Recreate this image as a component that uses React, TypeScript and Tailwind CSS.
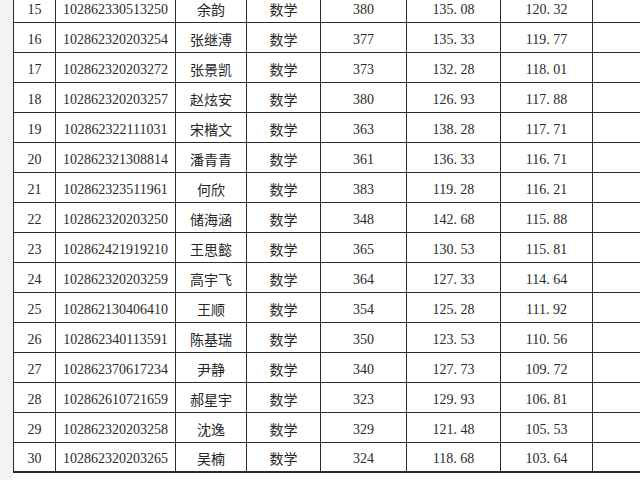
import React from "react";

const rows: [string, string, string, string, string, string][] = [
  ["15", "102862330513250", "余韵", "380", "135.08", "120.32"],
  ["16", "102862320203254", "张继溥", "377", "135.33", "119.77"],
  ["17", "102862320203272", "张景凯", "373", "132.28", "118.01"],
  ["18", "102862320203257", "赵炫安", "380", "126.93", "117.88"],
  ["19", "102862322111031", "宋楷文", "363", "138.28", "117.71"],
  ["20", "102862321308814", "潘青青", "361", "136.33", "116.71"],
  ["21", "102862323511961", "何欣", "383", "119.28", "116.21"],
  ["22", "102862320203250", "储海涵", "348", "142.68", "115.88"],
  ["23", "102862421919210", "王思懿", "365", "130.53", "115.81"],
  ["24", "102862320203259", "高宇飞", "364", "127.33", "114.64"],
  ["25", "102862130406410", "王顺", "354", "125.28", "111.92"],
  ["26", "102862340113591", "陈基瑞", "350", "123.53", "110.56"],
  ["27", "102862370617234", "尹静", "340", "127.73", "109.72"],
  ["28", "102862610721659", "郝星宇", "323", "129.93", "106.81"],
  ["29", "102862320203258", "沈逸", "329", "121.48", "105.53"],
  ["30", "102862320203265", "吴楠", "324", "118.68", "103.64"],
];

function Num({ v }: { v: string }) {
  const parts = v.split(".");
  if (parts.length === 1) return <span>{v}</span>;
  return (
    <span>
      {parts[0]}
      <span className="inline-block w-[7px] text-left">.</span>
      {parts[1]}
    </span>
  );
}

const num = "font-['Liberation_Serif',serif] text-[14px] text-[#2a2a2a]";
const cjk = "font-['Noto_Sans_CJK_SC',sans-serif] text-[14px] text-[#262626]";
const base = "border border-[#2b2b2b] text-center align-middle p-0 pt-[3px]";

export default function App() {
  return (
    <div className="w-[640px] h-[480px] overflow-hidden bg-white flex">
      <div className="w-[13px] shrink-0 bg-[#f3f3f3]" />
      <div className="flex flex-col shrink-0">
        <table className="border-collapse table-fixed w-[700px] mt-[-8px] border-b-2 border-[#2b2b2b]">
          <colgroup>
            <col className="w-[42px]" />
            <col className="w-[120px]" />
            <col className="w-[71px]" />
            <col className="w-[74px]" />
            <col className="w-[86px]" />
            <col className="w-[94px]" />
            <col className="w-[92px]" />
            <col className="w-[121px]" />
          </colgroup>
          <tbody>
            {rows.map((r, i) => {
              const last = i === rows.length - 1;
              const cell = `${base} ${last ? "h-[29px]" : "h-[30px]"}`;
              return (
                <tr key={r[0]} className={last ? "border-b-2 border-[#2b2b2b]" : ""}>
                  <td className={`${cell} ${num}`}>{r[0]}</td>
                  <td className={`${cell} ${num}`}>{r[1]}</td>
                  <td className={`${cell} ${cjk}`}>{r[2]}</td>
                  <td className={`${cell} ${cjk}`}>数学</td>
                  <td className={`${cell} ${num}`}>
                    <Num v={r[3]} />
                  </td>
                  <td className={`${cell} ${num}`}>
                    <Num v={r[4]} />
                  </td>
                  <td className={`${cell} ${num}`}>
                    <Num v={r[5]} />
                  </td>
                  <td className={cell}></td>
                </tr>
              );
            })}
          </tbody>
        </table>
        <div className="pl-[4px] pt-[5px] font-['Noto_Sans_CJK_SC',sans-serif] text-[14px] leading-[20px] text-[#c8c8c8] whitespace-nowrap">
          注：以上名单按初试成绩由高到低排序，复试安排另行通知，请考生及时关注学院网站。
        </div>
      </div>
    </div>
  );
}
